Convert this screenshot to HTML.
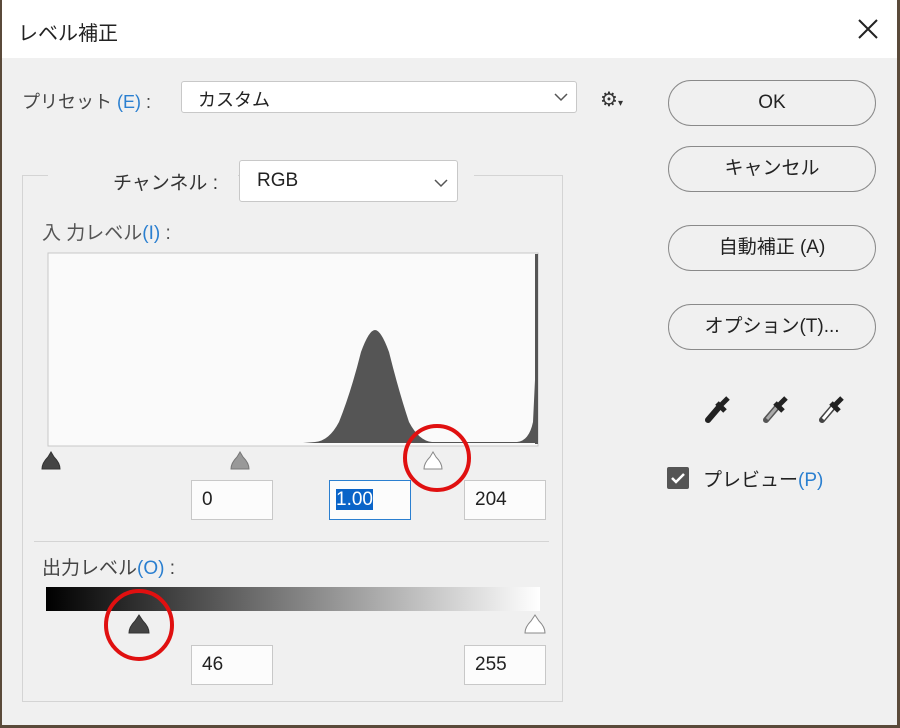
<!DOCTYPE html>
<html><head><meta charset="utf-8"><style>
*{margin:0;padding:0;box-sizing:border-box}
body{width:900px;height:728px;background:#5a4a3a;position:relative;overflow:hidden;font-family:"Liberation Sans","Noto Sans CJK JP",sans-serif;color:#222}
.dlg{position:absolute;left:2px;top:0;width:895px;height:725px;background:#f0f0f0}
.in{position:absolute;left:0;top:0;width:900px;height:728px}
.title{position:absolute;left:2px;top:0;width:895px;height:58px;background:#fff}
.a{position:absolute;white-space:nowrap}
.btn{position:absolute;left:668px;width:208px;height:46px;border:1px solid #8a8a8a;border-radius:23px;background:#f0f0f0;text-align:center;line-height:44px;font-size:19px}
.box{position:absolute;background:#fff;border:1px solid #c8c8c8}
.inp{position:absolute;background:#fcfcfc;border:1px solid #c8c8c8;height:40px;font-size:19px;line-height:38px;padding-left:10px}
.o{color:#2a7fd0}
</style></head><body>
<div class="dlg"></div>
<div class="in">
<div class="title"></div>
<div class="a" style="left:18px;top:17px;font-size:20px">レベル補正</div>
<svg class="a" style="left:856px;top:17px" width="24" height="24"><path d="M3 3L21 21M21 3L3 21" stroke="#222" stroke-width="2"/></svg>

<div class="a" style="left:22px;top:88px;font-size:18px;color:#444">プリセット <span class="o">(E)</span> :</div>
<div class="box" style="left:181px;top:81px;width:396px;height:32px;border-radius:3px"></div>
<div class="a" style="left:198px;top:86px;font-size:18px">カスタム</div>
<svg class="a" style="left:554px;top:92px" width="14" height="10"><path d="M1 2L7 8L13 2" stroke="#555" fill="none" stroke-width="1.5"/></svg>
<div class="a" style="left:600px;top:87px;font-size:20px;color:#333">⚙<span style="font-size:10px">▾</span></div>

<div class="a" style="left:22px;top:175px;width:541px;height:527px;border:1px solid #d4d4d4"></div>
<div class="a" style="left:48px;top:170px;width:190px;height:12px;background:#f0f0f0"></div>
<div class="a" style="left:458px;top:170px;width:16px;height:12px;background:#f0f0f0"></div>
<div class="a" style="left:113px;top:168px;font-size:19px;color:#333">チャンネル :</div>
<div class="box" style="left:239px;top:160px;width:219px;height:42px;border-radius:3px"></div>
<div class="a" style="left:257px;top:170px;font-size:19px">RGB</div>
<svg class="a" style="left:434px;top:178px" width="14" height="10"><path d="M1 2L7 8L13 2" stroke="#555" fill="none" stroke-width="1.5"/></svg>

<div class="a" style="left:42px;top:218px;font-size:19px;color:#555">入 力レベル<span class="o">(I)</span> :</div>
<svg class="a" style="left:47px;top:252px" width="495" height="196">
<rect x="1" y="1" width="490" height="193" fill="#fafafa" stroke="#c8c8c8"/>
<path d="M256 191L268 190Q282 189 292 170Q304 140 314 100Q322 78 328 78Q334 78 342 100Q352 140 362 170Q372 189 385 190L470 190Q482 189 486 170L488 128L490 128L490 191Z" fill="#555"/>
<rect x="488" y="2" width="3" height="190" fill="#555"/>
</svg>
<svg class="a" style="left:38px;top:447px" width="420" height="28">
<path d="M4 22Q4 16 10 10L13 5L16 10Q22 16 22 22Z" fill="#444" stroke="#333"/>
<path d="M193 22Q193 16 199 10L202 5L205 10Q211 16 211 22Z" fill="#999" stroke="#777"/>
<path d="M386 22Q386 16 392 10L395 5L398 10Q404 16 404 22Z" fill="#fff" stroke="#888"/>
</svg>
<svg class="a" style="left:401px;top:422px" width="72" height="72"><circle cx="36" cy="36" r="32" fill="none" stroke="#e01010" stroke-width="4"/></svg>
<div class="inp" style="left:191px;top:480px;width:82px">0</div>
<div class="inp" style="left:329px;top:480px;width:82px;border:1px solid #2a7fd0;padding-left:6px"><span style="background:#0a64c8;color:#fff">1.00</span></div>
<div class="inp" style="left:464px;top:480px;width:82px">204</div>

<div class="a" style="left:34px;top:541px;width:515px;height:1px;background:#d4d4d4"></div>
<div class="a" style="left:42px;top:553px;font-size:19px;color:#444">出力レベル<span class="o">(O)</span> :</div>
<div class="a" style="left:46px;top:587px;width:494px;height:24px;background:linear-gradient(90deg,#000,#fff)"></div>
<svg class="a" style="left:126px;top:610px" width="30" height="28"><path d="M3 23Q3 17 9 11L13 5L17 11Q23 17 23 23Z" fill="#444" stroke="#333"/></svg>
<svg class="a" style="left:522px;top:610px" width="30" height="28"><path d="M3 23Q3 17 9 11L13 5L17 11Q23 17 23 23Z" fill="#fff" stroke="#888"/></svg>
<svg class="a" style="left:101px;top:587px" width="76" height="76"><ellipse cx="38" cy="38" rx="33" ry="34" fill="none" stroke="#e01010" stroke-width="4"/></svg>
<div class="inp" style="left:191px;top:645px;width:82px">46</div>
<div class="inp" style="left:464px;top:645px;width:82px">255</div>

<div class="btn" style="top:80px">OK</div>
<div class="btn" style="top:146px">キャンセル</div>
<div class="btn" style="top:225px">自動補正 (A)</div>
<div class="btn" style="top:304px">オプション(T)...</div>

<svg class="a" style="left:700px;top:390px" width="160" height="34">
<g transform="translate(4,2)"><path d="M4 28L16 14" stroke="#222" stroke-width="6" stroke-linecap="round"/><path d="M13 11L21 19M16 14L24 6" stroke="#222" stroke-width="5"/><path d="M5 26L13 17" stroke="#222" stroke-width="2"/></g>
<g transform="translate(62,2)"><path d="M4 28L16 14" stroke="#555" stroke-width="6" stroke-linecap="round"/><path d="M5 27L15 15" stroke="#aaa" stroke-width="3"/><path d="M13 11L21 19M16 14L24 6" stroke="#222" stroke-width="5"/></g>
<g transform="translate(118,2)"><path d="M4 28L16 14" stroke="#444" stroke-width="6" stroke-linecap="round"/><path d="M5 27L15 15" stroke="#fff" stroke-width="3"/><path d="M13 11L21 19M16 14L24 6" stroke="#222" stroke-width="5"/></g>
</svg>
<div class="a" style="left:667px;top:467px;width:22px;height:22px;background:#555;border-radius:2px"></div>
<svg class="a" style="left:667px;top:467px" width="22" height="22"><path d="M5 11L9 15L17 7" stroke="#fff" stroke-width="2.5" fill="none"/></svg>
<div class="a" style="left:703px;top:465px;font-size:19px">プレビュー<span class="o">(P)</span></div>
</div>
</body></html>
